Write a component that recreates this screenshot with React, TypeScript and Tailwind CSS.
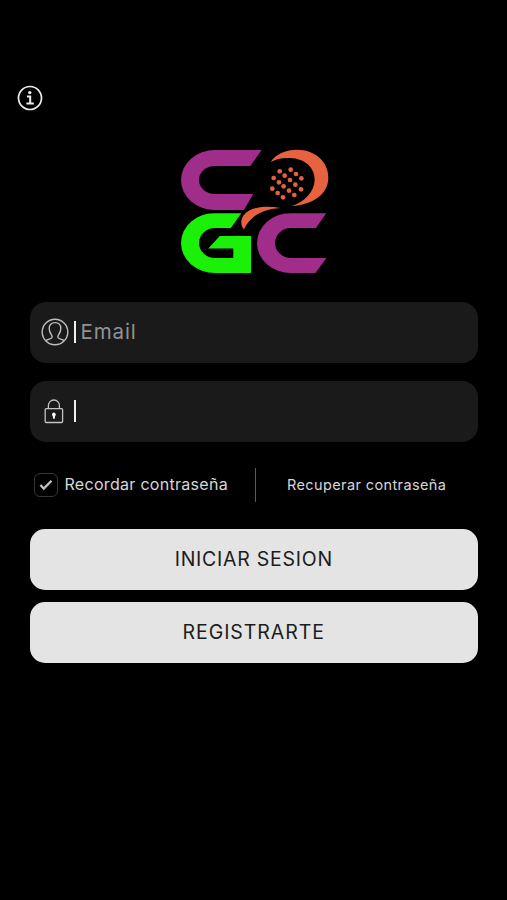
import React, { useState } from "react";

const dots = [
  [329, 94], [362, 89], [311, 114], [344, 107], [378, 102], [394, 115],
  [327, 127], [360, 120], [307, 146], [341, 139], [376, 134], [393, 148],
  [323, 159], [357, 152], [373, 165], [339, 172],
];

const Logo: React.FC = () => (
  <div className="relative w-[147px] h-[123px] ml-[180.7px]">
    <div className="w-[81px] h-[60.3px] border-[#a12d8b] border-y-[16px] border-l-[18.6px] [border-radius:34px_0_0_34px/30px_0_0_30px] [clip-path:polygon(0_0,81px_0,69.6px_16px,69.6px_40px,75px_40px,62.6px_61px,0_61px)]" />
    <div className="flex gap-[6px] mt-[3px]">
      <div className="relative w-[70.3px] h-[59.4px]">
        <div className="w-full h-full border-[#1bf008] border-y-[15.6px] border-l-[18.6px] [border-radius:34px_0_0_34px/30px_0_0_30px] [clip-path:polygon(0_0,60.6px_0,49.3px_16px,49.3px_40px,71px_40px,71px_60px,0_60px)]" />
        <div className="absolute right-0 bottom-0 w-[42.7px] h-[37px] bg-[#1bf008] [clip-path:polygon(11.7px_0,100%_0,100%_100%,25px_100%,25px_12.7px,0_12.7px)]" />
      </div>
      <div className="w-[70px] h-[59.7px] border-[#a12d8b] border-y-[15.5px] border-l-[18.4px] [border-radius:34px_0_0_34px/30px_0_0_30px] [clip-path:polygon(0_0,69.3px_0,58px_16px,58px_44px,70px_44px,58.3px_60px,0_60px)]" />
    </div>
    <svg
      viewBox="0 0 510 420"
      className="absolute -left-[10.7px] -top-[10px] w-[170px] h-[140px] max-w-none"
      fill="#e8623f"
    >
      <path d="M302 66C322 37 362 25 400 31C448 39 476 75 475 115C474 166 424 195 366 198C402 186 433 157 434 120C435 84 405 55 360 54C335 53 316 58 302 66Z" />
      <path d="M331 204C290 196 243 199 222 224C210 239 212 258 222 268C236 239 262 209 331 204Z" />
      {dots.map(([x, y]) => (
        <circle key={`${x}-${y}`} cx={x} cy={y} r="7" />
      ))}
    </svg>
  </div>
);

const InfoIcon: React.FC = () => (
  <svg viewBox="0 0 26 26" className="w-[26px] h-[26px]" fill="none" stroke="#ececec" strokeWidth="1.7">
    <circle cx="13" cy="13" r="11.5" />
    <circle cx="12.8" cy="7.6" r="1.7" fill="#ececec" stroke="none" />
    <path d="M10 11.4h3.2v7M9.4 18.6h7.4" strokeWidth="2" />
  </svg>
);

const UserIcon: React.FC = () => (
  <svg viewBox="0 0 28 28" className="w-7 h-7 shrink-0" fill="none" stroke="#bdbdbd" strokeWidth="1.4">
    <circle cx="14" cy="14" r="12.8" />
    <path d="M4.8 22.8C7 20.8 11.2 21.2 11.2 19C11.2 17 8.2 15 8.2 10.4C8.2 6.8 10.4 4.6 14 4.6S19.8 6.8 19.8 10.4C19.8 15 16.8 17 16.8 19C16.8 21.2 21 20.8 23.2 22.8" />
  </svg>
);

const LockIcon: React.FC = () => (
  <svg viewBox="0 0 20 25" className="w-5 h-[25px] shrink-0" fill="none" stroke="#c4c4c4" strokeWidth="1.3">
    <rect x="1.2" y="9.7" width="17.4" height="13.8" rx="1" />
    <path d="M4.4 9.7V6.5a5.5 5.5 0 0 1 11 0v3.2" />
    <path d="M9.9 13.6a2 2 0 0 1 1.2 3.5l-.4 2.6H9.1l-.4-2.6a2 2 0 0 1 1.2-3.5z" fill="#fff" stroke="none" />
  </svg>
);

const App: React.FC = () => {
  const [remember, setRemember] = useState(true);

  return (
    <main className="w-full h-[900px] bg-black overflow-hidden font-['Inter',sans-serif]">
      <header className="pt-[84.5px] pl-[17px] h-[150px]">
        <button className="block" aria-label="Info">
          <InfoIcon />
        </button>
      </header>
      <Logo />
      <form className="mx-[30px] mt-[29px] w-[447.5px]">
        <label className="flex items-center h-[60.5px] rounded-[16px] bg-[#1a1a1a] pl-[11px]">
          <UserIcon />
          <span className="w-[2px] h-[22px] bg-[#efefef] ml-[4.5px] mr-[5px]" />
          <input
            type="text"
            placeholder="Email"
            className="flex-1 bg-transparent outline-none text-[20.5px] tracking-[0.9px] text-white placeholder:text-[#929292]"
          />
        </label>
        <label className="flex items-center h-[61px] rounded-[16px] bg-[#1a1a1a] pl-[14px] pb-px mt-[18.5px]">
          <LockIcon />
          <span className="w-[2px] h-[22px] bg-[#efefef] ml-[9.5px] mr-[5px]" />
          <input type="password" className="flex-1 bg-transparent outline-none text-white" />
        </label>
        <div className="flex items-center h-[87px] pb-[2px]">
          <button
            type="button"
            className="flex items-center ml-1"
            onClick={() => setRemember(!remember)}
          >
            <span className="flex items-center justify-center w-[24px] h-[24px] rounded-[6px] border border-[#363636]">
              {remember && (
                <svg viewBox="0 0 14 12" className="w-[14px] h-3" fill="none" stroke="#c2c2c2" strokeWidth="2.3">
                  <path d="M1.4 6l3.4 3.5L12.5 1.8" />
                </svg>
              )}
            </span>
            <span className="ml-[6.5px] pb-px text-[16px] tracking-[0.3px] text-[#d6d6d6] whitespace-nowrap">
              Recordar contraseña
            </span>
          </button>
          <span className="w-px h-[34px] bg-[#5a5a5a] ml-[27px]" />
          <a href="#" className="ml-[31px] text-[14.5px] tracking-[0.38px] text-[#d6d6d6] whitespace-nowrap">
            Recuperar contraseña
          </a>
        </div>
        <button
          type="button"
          className="block w-full h-[61px] rounded-[15px] bg-[#e4e4e4] text-[19.5px] text-[#1c1c1c] tracking-[0.75px]"
        >
          INICIAR SESION
        </button>
        <button
          type="button"
          className="block w-full h-[61px] mt-3 rounded-[15px] bg-[#e4e4e4] text-[19.5px] text-[#1c1c1c] tracking-[0.95px]"
        >
          REGISTRARTE
        </button>
      </form>
    </main>
  );
};

export default App;
